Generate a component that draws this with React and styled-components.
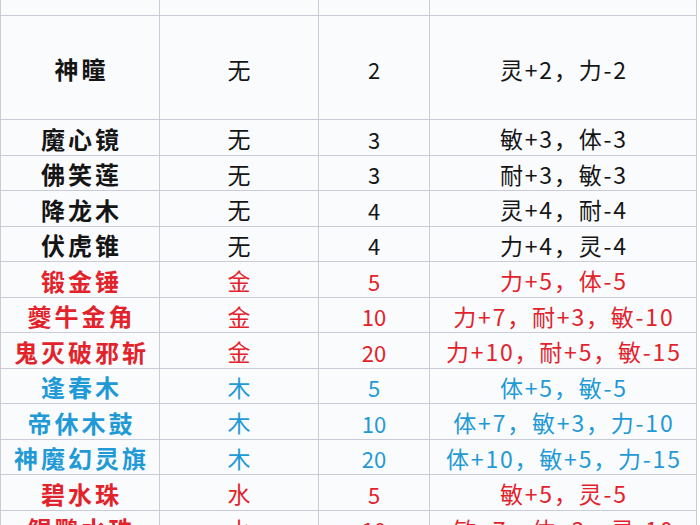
import React from 'react';
import styled, { createGlobalStyle } from 'styled-components';

const GlobalStyle = createGlobalStyle`
    html, body {
        margin: 0;
        padding: 0;
        background: #ffffff;
        overflow: hidden;
    }
    body {
        font-family: "Noto Sans CJK SC", "Noto Sans", sans-serif;
    }
`;

const colors = {
    black: '#151515',
    red: '#e2232b',
    blue: '#1f9ad6'
};

const Sheet = styled.div`
    display: grid;
    grid-template-columns: 160px 159px 111px 267px;
    grid-template-rows: 16px 104px repeat(12, 35.5px);
    width: 697px;
    background: #fafbfd;
`;

const Cell = styled.div`
    box-sizing: border-box;
    display: flex;
    align-items: center;
    justify-content: center;
    padding-top: 3px;
    border-right: 1.5px solid #c9ccd6;
    border-bottom: 1.5px solid #c9ccd6;
    border-left: ${p => (p.$first ? '1.5px solid #c9ccd6' : 'none')};
    color: ${p => colors[p.$tone] || colors.black};
    font-size: 23px;
    white-space: nowrap;
    line-height: 1;
`;

const NameCell = styled(Cell)`
    font-weight: 700;
    font-size: 24px;
    letter-spacing: 3px;
    text-indent: 3px;
`;

const LevelCell = styled(Cell)`
    font-size: 22px;
`;

const StatCell = styled(Cell)`
    letter-spacing: 1.8px;
    text-indent: 1.8px;
`;

const rows = [
    { name: '神瞳', el: '无', lv: '2', stat: '灵+2，力-2', tone: 'black' },
    { name: '魔心镜', el: '无', lv: '3', stat: '敏+3，体-3', tone: 'black' },
    { name: '佛笑莲', el: '无', lv: '3', stat: '耐+3，敏-3', tone: 'black' },
    { name: '降龙木', el: '无', lv: '4', stat: '灵+4，耐-4', tone: 'black' },
    { name: '伏虎锥', el: '无', lv: '4', stat: '力+4，灵-4', tone: 'black' },
    { name: '锻金锤', el: '金', lv: '5', stat: '力+5，体-5', tone: 'red' },
    { name: '夔牛金角', el: '金', lv: '10', stat: '力+7，耐+3，敏-10', tone: 'red' },
    { name: '鬼灭破邪斩', el: '金', lv: '20', stat: '力+10，耐+5，敏-15', tone: 'red' },
    { name: '逢春木', el: '木', lv: '5', stat: '体+5，敏-5', tone: 'blue' },
    { name: '帝休木鼓', el: '木', lv: '10', stat: '体+7，敏+3，力-10', tone: 'blue' },
    { name: '神魔幻灵旗', el: '木', lv: '20', stat: '体+10，敏+5，力-15', tone: 'blue' },
    { name: '碧水珠', el: '水', lv: '5', stat: '敏+5，灵-5', tone: 'red' },
    { name: '鲲鹏水珠', el: '水', lv: '10', stat: '敏+7，体+3，灵-10', tone: 'red' }
];

const App = () => {
    return (
        <>
            <GlobalStyle />
            <Sheet>
                <Cell $first />
                <Cell />
                <Cell />
                <Cell />
                {rows.map(r => (
                    <React.Fragment key={r.name}>
                        <NameCell $first $tone={r.tone}>
                            {r.name}
                        </NameCell>
                        <Cell $tone={r.tone}>{r.el}</Cell>
                        <LevelCell $tone={r.tone}>{r.lv}</LevelCell>
                        <StatCell $tone={r.tone}>{r.stat}</StatCell>
                    </React.Fragment>
                ))}
            </Sheet>
        </>
    );
};

export default App;
